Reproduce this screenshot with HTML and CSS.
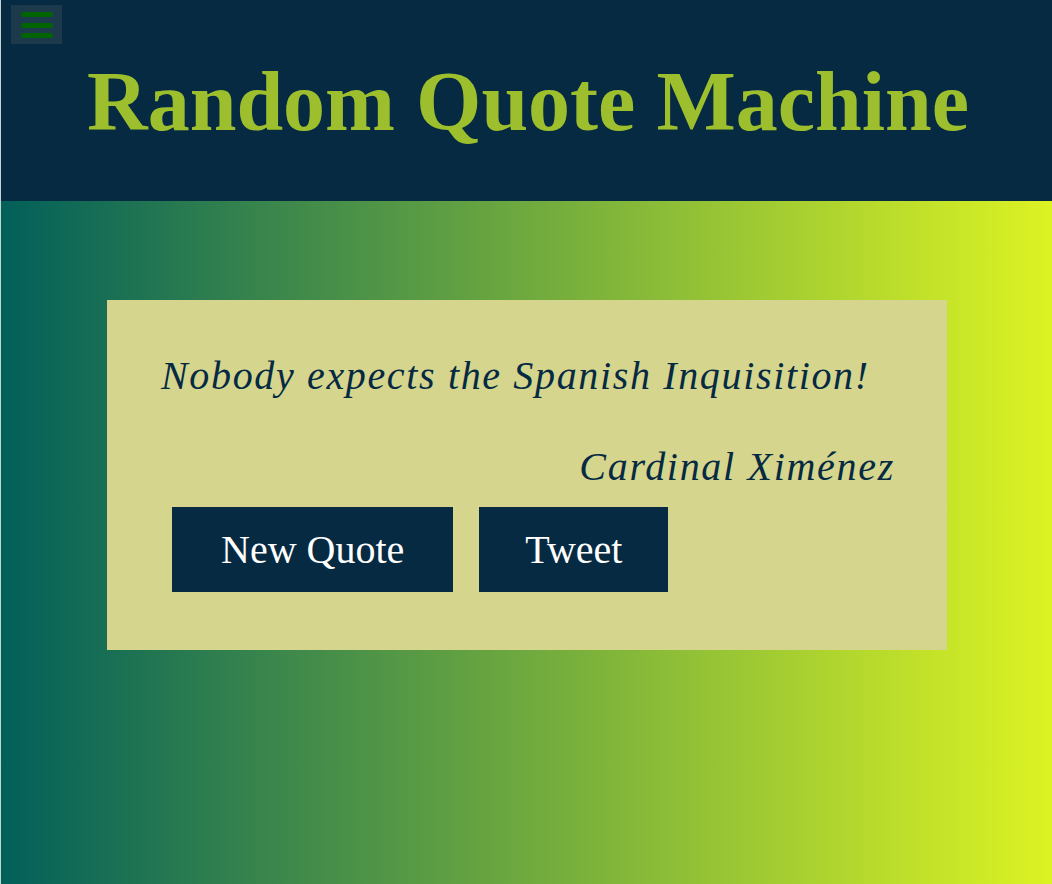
FILE: index.html
```html
<!DOCTYPE html>
<html lang="en">
<head>
<meta charset="utf-8">
<title>Random Quote Machine</title>
<link rel="stylesheet" href="styles.css">
</head>
<body>
<header class="header">
  <button class="menu" aria-label="Menu">
    <span class="menu-bar"></span>
    <span class="menu-bar"></span>
    <span class="menu-bar"></span>
  </button>
  <h1 class="title">Random Quote Machine</h1>
</header>
<main class="stage">
  <section class="card" id="quote-box">
    <p class="quote" id="text">Nobody expects the Spanish Inquisition!</p>
    <p class="author" id="author">Cardinal Ximénez</p>
    <div class="actions">
      <button class="btn btn-new" id="new-quote">New Quote</button>
      <a class="btn btn-tweet" id="tweet-quote">Tweet</a>
    </div>
  </section>
</main>
</body>
</html>
```
FILE: styles.css
```css
* { box-sizing: border-box; }

html, body {
  margin: 0;
  padding: 0;
}

body {
  font-family: "Liberation Serif", "Times New Roman", serif;
  border-left: 1px solid #c9d2d2;
  min-height: 884px;
  display: flex;
  flex-direction: column;
}

.header {
  position: relative;
  background: #052a42;
  height: 201px;
  padding-top: 60px;
}

.menu {
  position: absolute;
  left: 10px;
  top: 5px;
  width: 51px;
  height: 39px;
  background: #1c3a4b;
  border: 0;
  padding: 7px 0 0 10px;
  display: flex;
  flex-direction: column;
  gap: 5.5px;
  cursor: pointer;
}

.menu-bar {
  display: block;
  width: 32px;
  height: 5px;
  border-radius: 3px;
  background: #006400;
}

.title {
  margin: 0;
  text-align: center;
  color: #9dbf2d;
  font-size: 84px;
  line-height: 84px;
  font-weight: bold;
  padding-left: 3px;
}

.stage {
  flex: 1;
  background: linear-gradient(to right, #02605a 0%, #dcf323 100%);
  padding-top: 99px;
}

.card {
  width: 840px;
  margin: 0 0 0 106px;
  background: #d5d58d;
  padding: 52px 52px 58px 54px;
  color: #052a42;
}

.quote {
  margin: 0;
  font-style: italic;
  font-size: 40px;
  line-height: 48px;
  letter-spacing: 1.65px;
}

.author {
  margin: 43px 0 0;
  text-align: right;
  font-style: italic;
  font-size: 40px;
  line-height: 48px;
  letter-spacing: 1.7px;
}

.actions {
  margin-top: 16px;
  padding-left: 11px;
  display: flex;
  gap: 26px;
}

.btn {
  display: block;
  background: #052a42;
  color: #ffffff;
  border: 0;
  font-family: inherit;
  font-size: 40px;
  line-height: 85px;
  height: 85px;
  text-decoration: none;
  cursor: pointer;
}

.btn-new {
  padding: 0 49px;
}

.btn-tweet {
  padding: 0 46px;
}
```
